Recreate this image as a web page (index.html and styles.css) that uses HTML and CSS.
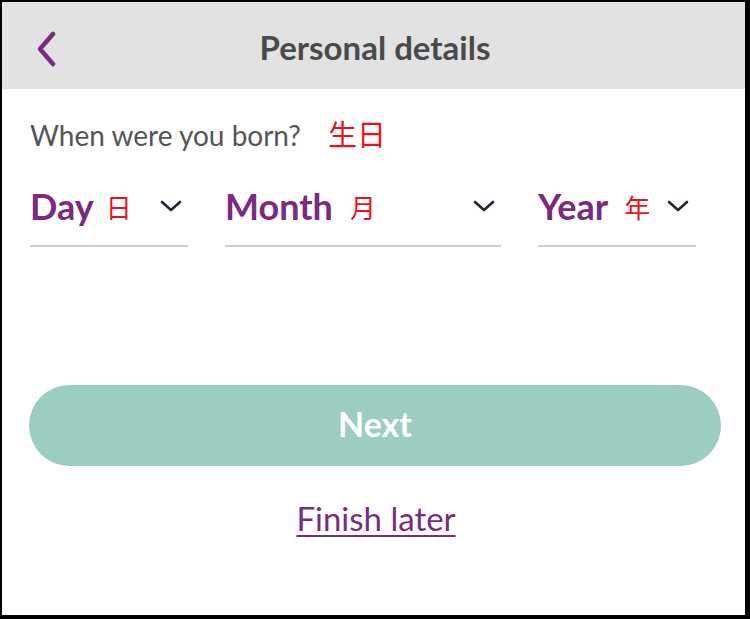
FILE: index.html
```html
<!DOCTYPE html>
<html>
<head>
<meta charset="utf-8">
<link rel="stylesheet" href="styles.css">
</head>
<body>
<div class="frame">
  <header class="topbar">
    <span class="back">
      <svg width="22" height="36" viewBox="0 0 22 36"><path d="M18 3 L5 18 L18 33" fill="none" stroke="#7b2a82" stroke-width="4.5" stroke-linecap="round" stroke-linejoin="round"/></svg>
    </span>
    <h1 class="title">Personal details</h1>
  </header>
  <main class="content">
    <p class="question">When were you born?<span class="cjk q-cjk">生日</span></p>
    <div class="fields">
      <div class="field f-day">
        <span class="label">Day</span><span class="cjk l-cjk">日</span>
        <svg class="chev" width="24" height="14" viewBox="0 0 24 14"><path d="M3 3 L12 11 L21 3" fill="none" stroke="#2b1d3a" stroke-width="2.6" stroke-linecap="round" stroke-linejoin="round"/></svg>
      </div>
      <div class="field f-month">
        <span class="label">Month</span><span class="cjk l-cjk">月</span>
        <svg class="chev" width="24" height="14" viewBox="0 0 24 14"><path d="M3 3 L12 11 L21 3" fill="none" stroke="#2b1d3a" stroke-width="2.6" stroke-linecap="round" stroke-linejoin="round"/></svg>
      </div>
      <div class="field f-year">
        <span class="label">Year</span><span class="cjk l-cjk">年</span>
        <svg class="chev" width="24" height="14" viewBox="0 0 24 14"><path d="M3 3 L12 11 L21 3" fill="none" stroke="#2b1d3a" stroke-width="2.6" stroke-linecap="round" stroke-linejoin="round"/></svg>
      </div>
    </div>
    <button class="next">Next</button>
    <a class="later" href="#">Finish later</a>
  </main>
</div>
</body>
</html>
```
FILE: styles.css
```css
html, body {
  margin: 0;
  padding: 0;
  background: #000;
}
.frame {
  width: 743px;
  height: 613px;
  margin: 2px 0 0 2px;
  background: #fff;
  font-family: Lato, "Noto Sans CJK SC", sans-serif;
  overflow: hidden;
}
.topbar {
  height: 87px;
  background: #e2e2e2;
  display: flex;
  align-items: center;
  justify-content: center;
  position: relative;
}
.back {
  position: absolute;
  left: 33px;
  top: 29px;
  display: flex;
}
.title {
  margin: 0 0 0 3px;
  padding-top: 2px;
  font-size: 33px;
  font-weight: 700;
  color: #4a4a4a;
}
.content {
  padding: 0 0 0 28px;
}
.question {
  margin: 24px 0 0 0;
  font-size: 28px;
  color: #555;
  line-height: 40px;
  height: 40px;
}
.cjk {
  font-family: "Noto Sans CJK SC", sans-serif;
  color: #e8141b;
}
.q-cjk {
  margin-left: 27px;
  font-size: 29px;
}
.fields {
  display: flex;
  gap: 37px;
  margin-top: 20px;
}
.field {
  height: 60px;
  border-bottom: 2px solid #cfcfcf;
  display: flex;
  align-items: center;
  padding-top: 3px;
  padding-bottom: 9px;
  box-sizing: content-box;
}
.f-day { width: 158px; }
.f-month { width: 276px; }
.f-year { width: 158px; }
.label {
  font-size: 36px;
  font-weight: 700;
  color: #7b2a82;
}
.l-cjk {
  font-size: 26px;
  margin-left: 12px;
}
.f-month .l-cjk { margin-left: 17px; }
.f-year .l-cjk { margin-left: 16px; }
.chev {
  margin-left: auto;
  margin-right: 5px;
}
.f-year .chev { margin-right: 6px; }
.next {
  display: block;
  width: 692px;
  height: 81px;
  margin-top: 138px;
  margin-left: -1px;
  border: none;
  border-radius: 41px;
  background: #9bcdc3;
  color: #fff;
  font-family: Lato, sans-serif;
  font-weight: 700;
  font-size: 34px;
  padding-bottom: 6px;
}
.later {
  display: block;
  width: 692px;
  text-align: center;
  margin-top: 32px;
  font-size: 33px;
  color: #7b2a82;
  text-decoration: underline;
  text-decoration-thickness: 2px;
  text-underline-offset: 4px;
}
```
